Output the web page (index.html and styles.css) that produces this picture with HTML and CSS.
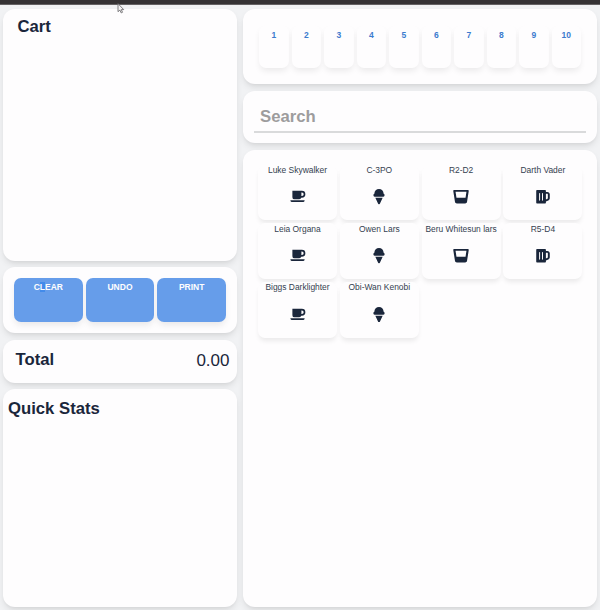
FILE: index.html
```html
<!DOCTYPE html>
<html lang="en">
<head>
<meta charset="utf-8">
<title>Cart</title>
<link rel="stylesheet" href="styles.css">
</head>
<body>
<svg class="defs" aria-hidden="true">
  <symbol id="coffee" viewBox="0 0 16 16"><path fill-rule="evenodd" d="M2.200 1.800h9.800a3.200 3.200 0 0 1 0 7.200h-.7a2.500 2.500 0 0 1-2.400 1.700H4.500a2.300 2.300 0 0 1-2.300-2.300zM11.500 3.700v3.500h.6a1.750 1.750 0 0 0 0-3.500zM.2 11.700h14.600v.5a1.200 1.200 0 0 1-1.200 1.200H1.400a1.200 1.200 0 0 1-1.200-1.200z"/></symbol>
  <symbol id="cone" viewBox="0 0 16 16"><path d="M3.200 5C3.300 2.200 5.300.1 8 .1S12.700 2.200 12.800 5c1.400.3 1.300 3-.3 3h-9c-1.600 0-1.700-2.700-.3-3zM4.200 9h7.600l-2.900 6.300c-.3.800-1.500.8-1.800 0z"/></symbol>
  <symbol id="glass" viewBox="0 0 512 512"><path d="M480 32H32C12.500 32-2.400 49.200.3 68.500l56 356.500c4.500 31.500 31.500 54.900 63.400 54.900h273c31.800 0 58.900-23.400 63.400-54.900l55.600-356.500C514.400 49.200 499.500 32 480 32zm-44 56l-30 200H106L76 88h360z"/></symbol>
  <symbol id="beer" viewBox="0 0 448 512"><path d="M368 96h-48V56c0-13.300-10.700-24-24-24H24C10.700 32 0 42.700 0 56v400c0 13.300 10.700 24 24 24h272c13.300 0 24-10.700 24-24v-42.100l80.600-36c28.900-12.900 47.400-41.500 47.400-73V176c0-44.100-35.900-80-80-80zm16 208.900c0 6.300-3.700 12-9.500 14.600L320 343.800V160h48c8.800 0 16 7.200 16 16v128.900zM208 384c-8.800 0-16-7.200-16-16V144c0-8.800 7.200-16 16-16s16 7.200 16 16v224c0 8.800-7.200 16-16 16zm-96 0c-8.800 0-16-7.200-16-16V144c0-8.800 7.200-16 16-16s16 7.200 16 16v224c0 8.800-7.200 16-16 16z"/></symbol>
</svg>
<div class="topbar"></div>
<main class="layout">
  <div class="column">
    <section class="card cart"><h2>Cart</h2></section>
    <section class="card actions">
      <button><span>C<span class="selected">L</span>EAR</span></button><button>UNDO</button><button>PRINT</button>
    </section>
    <section class="card total"><h2>Total</h2><span class="amount">0.00</span></section>
    <section class="card stats"><h2>Quick Stats</h2></section>
  </div>
  <div class="column">
    <section class="card numbers">
      <div class="number">1</div><div class="number">2</div><div class="number">3</div><div class="number">4</div><div class="number">5</div><div class="number">6</div><div class="number">7</div><div class="number">8</div><div class="number">9</div><div class="number">10</div>
    </section>
    <section class="card search"><input type="text" placeholder="Search" aria-label="Search"></section>
    <section class="card products">
      <div class="item"><span>Luke Skywalker</span><svg><use href="#coffee"/></svg></div>
      <div class="item"><span>C-3PO</span><svg><use href="#cone"/></svg></div>
      <div class="item"><span>R2-D2</span><svg><use href="#glass"/></svg></div>
      <div class="item"><span>Darth Vader</span><svg><use href="#beer"/></svg></div>
      <div class="item"><span>Leia Organa</span><svg><use href="#coffee"/></svg></div>
      <div class="item"><span>Owen Lars</span><svg><use href="#cone"/></svg></div>
      <div class="item"><span>Beru Whitesun lars</span><svg><use href="#glass"/></svg></div>
      <div class="item"><span>R5-D4</span><svg><use href="#beer"/></svg></div>
      <div class="item"><span>Biggs Darklighter</span><svg><use href="#coffee"/></svg></div>
      <div class="item"><span>Obi-Wan Kenobi</span><svg><use href="#cone"/></svg></div>
    </section>
  </div>
</main>
<svg class="pointer" viewBox="0 0 8 11"><path d="M1 .7v8l1.900-1.600 1.300 2.800 1.300-.6-1.200-2.700h2.400z"/></svg>
</body>
</html>
```
FILE: styles.css
```css
* { box-sizing: border-box; }
body {
  margin: 0;
  height: 610px;
  overflow: hidden;
  background: #f1f2f4;
  color: #1a263b;
  font-family: "Liberation Sans", Arial, sans-serif;
}
.defs { position: absolute; width: 0; height: 0; }
.topbar { height: 5px; background: #353234; border-bottom: 1px solid #646163; }
.layout {
  display: grid;
  grid-template-columns: 234px 354px;
  gap: 6px;
  height: 605px;
  padding: 3.500px 3px;
}
.column { display: grid; gap: 6.500px; height: 598.500px; }
.column:first-child { grid-template-rows: 252px 66px 43px 1fr; }
.column:last-child { grid-template-rows: 75.500px 52.500px 1fr; }
.card {
  min-width: 0;
  background: #fefdfe;
  border-radius: 12px;
  box-shadow: 0 4px 7px -1px rgba(0, 0, 0, .1), 0 2px 3px -1px rgba(0, 0, 0, .04);
}
h2 { margin: 0; font-size: 16.700px; line-height: 20px; }
.cart { padding: 8.500px 14.500px; }
.actions { display: flex; gap: 3px; padding: 11px; }
.actions button {
  flex: 1;
  display: flex;
  justify-content: center;
  align-items: flex-start;
  height: 44px;
  padding: 4px 0;
  border: 0;
  border-radius: 7px;
  background: #669dea;
  color: #fefdfe;
  font: bold 8.500px/10px "Liberation Sans", Arial, sans-serif;
  box-shadow: 0 4px 7px -1px rgba(0, 0, 0, .09);
}
.selected { background: #438bea; }
.total { display: flex; justify-content: space-between; padding: 10px 7.500px 0 12.500px; }
.amount { font-size: 17px; line-height: 22px; }
.stats { padding: 9.500px 5px; }
.numbers { display: flex; gap: 3px; padding: 16px 16px 0; }
.number {
  flex: 1;
  height: 43.500px;
  padding-top: 5px;
  border-radius: 7px;
  background: #fefdfe;
  color: #3c7bce;
  text-align: center;
  font-size: 8.500px;
  font-weight: bold;
  line-height: 10px;
  box-shadow: 0 4px 6px -1px rgba(0, 0, 0, .08);
}
.search { padding: 11px; }
.search input {
  display: block;
  width: 100%;
  height: 31px;
  padding: 1px 6px 0;
  border: 0;
  border-bottom: 2px solid #d9dadb;
  outline: 0;
  background: transparent;
  font: bold 16.700px "Liberation Sans", Arial, sans-serif;
}
.search input::placeholder { color: #9d9c9d; opacity: 1; }
.products {
  display: grid;
  grid-template-columns: repeat(4, 79px);
  grid-auto-rows: 55.700px;
  align-content: start;
  gap: 3px 2.800px;
  padding: 15px 15px 0;
}
.item {
  display: flex;
  flex-direction: column;
  align-items: center;
  padding-top: .4px;
  border-radius: 7px;
  background: #fefdfe;
  font-size: 8.450px;
  line-height: 10px;
  white-space: nowrap;
  color: #353f50;
  box-shadow: 0 4px 5px -1px rgba(0, 0, 0, .08);
}
.item svg { width: 16px; height: 15.500px; margin-top: 14.600px; fill: #1a263b; }
.pointer { position: absolute; left: 117px; top: 3px; width: 8px; height: 11px; fill: #f4f3f4; stroke: #716f73; stroke-width: .9; }
```
